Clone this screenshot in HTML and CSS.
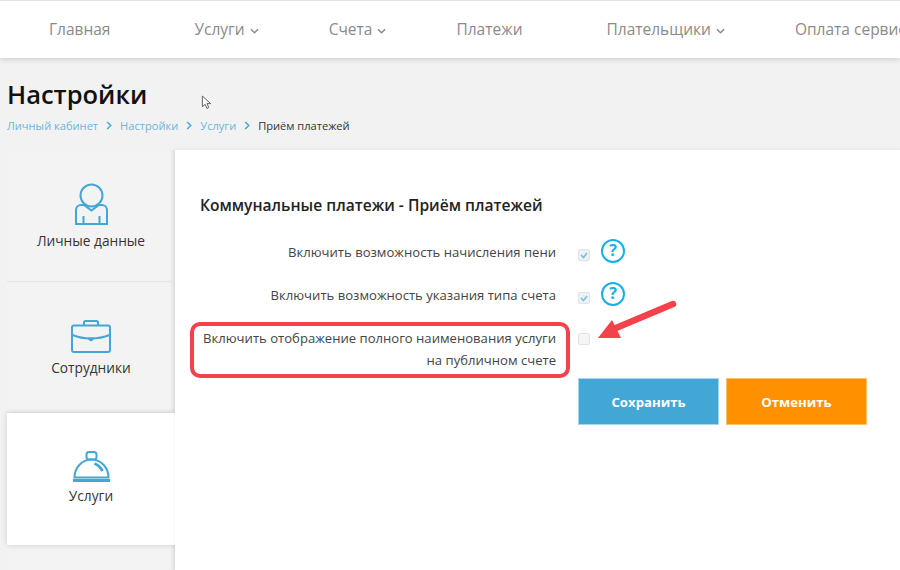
FILE: index.html
```html
<!DOCTYPE html>
<html>
<head>
	<title>Настройки</title>
	<meta name="viewport" content="width=device-width, initial-scale=1">
	<link rel="stylesheet" href="styles.css">
</head>
<body>
	<div class="top-nav">
		<a class="plain">Главная</a>
		<a>Услуги <svg class="chevron" viewBox="0 0 10 6"><path d="M1 1l4 4 4-4"/></svg></a>
		<a>Счета <svg class="chevron" viewBox="0 0 10 6"><path d="M1 1l4 4 4-4"/></svg></a>
		<a class="plain">Платежи</a>
		<a>Плательщики <svg class="chevron" viewBox="0 0 10 6"><path d="M1 1l4 4 4-4"/></svg></a>
		<a>Оплата сервиса</a>
	</div>

	<div class="page-head">
		<h1>Настройки</h1>
		<div class="breadcrumbs">
			<a>Личный кабинет</a>
			<svg class="crumb-arrow" viewBox="0 0 6 10"><path d="M1 1l4 4-4 4"/></svg>
			<a>Настройки</a>
			<svg class="crumb-arrow" viewBox="0 0 6 10"><path d="M1 1l4 4-4 4"/></svg>
			<a>Услуги</a>
			<svg class="crumb-arrow" viewBox="0 0 6 10"><path d="M1 1l4 4-4 4"/></svg>
			<span>Приём платежей</span>
		</div>
	</div>

	<div class="layout">
		<div class="side-menu">
			<div class="side-item person">
				<svg class="side-icon" viewBox="0 0 33 42">
					<circle cx="16.500" cy="12.500" r="11"/>
					<path d="M9 22H6a5 5 0 0 0-5 5v14h31V27a5 5 0 0 0-5-5h-3l-7.500 5.500z"/>
					<path d="M8.500 33v8M24.500 33v8"/>
				</svg>
				<span>Личные данные</span>
			</div>
			<div class="side-item case">
				<svg class="side-icon" viewBox="0 0 40 33">
					<rect x="1" y="5.500" width="38" height="26.500" rx="2"/>
					<path d="M13 5.500V2.500A1.500 1.500 0 0 1 14.500 1h11A1.500 1.500 0 0 1 27 2.500v3"/>
					<path d="M1.500 15c6 2.500 12.500 3.500 18.500 3.500s12.500-1 18.500-3.500"/>
					<path class="solid" d="M17.500 17.500h5v2.500l-2.500 1.500-2.500-1.500z"/>
				</svg>
				<span>Сотрудники</span>
			</div>
			<div class="side-item active">
				<svg class="side-icon" viewBox="0 0 37 32">
					<path d="M1.500 26.500a17 18 0 0 1 34 0z"/>
					<rect x="13.500" y="1" width="10" height="7.500" rx="2.500"/>
					<path d="M0 29.500h37" class="thick"/>
					<path d="M21.500 12.500c3.500 1.500 6.500 4.500 8 7.500" class="thick"/>
				</svg>
				<span>Услуги</span>
			</div>
			<div class="side-item rest"></div>
		</div>

		<div class="content">
			<h2>Коммунальные платежи - Приём платежей</h2>
			<div class="form-row">
				<label>Включить возможность начисления пени</label>
				<span class="check on"><svg viewBox="0 0 10 10"><path d="M2 5l2.500 2.500L8 3"/></svg></span>
				<span class="help">?</span>
			</div>
			<div class="form-row">
				<label>Включить возможность указания типа счета</label>
				<span class="check on"><svg viewBox="0 0 10 10"><path d="M2 5l2.500 2.500L8 3"/></svg></span>
				<span class="help">?</span>
			</div>
			<div class="form-row wide">
				<label>Включить отображение полного наименования услуги<br>на публичном счете</label>
				<span class="check"></span>
			</div>
			<div class="buttons">
				<button class="save">Сохранить</button>
				<button class="cancel">Отменить</button>
			</div>
		</div>
	</div>

	<!-- пометки поверх скриншота -->
	<svg class="cursor" viewBox="0 0 12 16"><path d="M1.500 1v11.500l3-2.500 2 4.500 2-1-2-4.300h4z"/></svg>
	<div class="red-box"></div>
	<svg class="red-arrow" viewBox="0 0 90 50">
		<path class="shaft" d="M81 8L24 32"/>
		<path class="head" d="M6 42L20 24l9 18z"/>
	</svg>
</body>
</html>
```

FILE: styles.css
```css
* {
	box-sizing: border-box;
}
html, body {
	height: 570px;
	overflow: hidden;
}
body {
	margin: 0;
	padding: 0;
	position: relative;
	font-family: "Open Sans", sans-serif;
	background-color: #f2f2f2;
	color: #333;
}
.top-nav {
	display: flex;
	gap: 70px;
	align-items: center;
	height: 58px;
	padding: 0 0 2px 49px;
	background-color: #fff;
	border-top: 1px solid #e4e4e4;
	box-shadow: 0px 1px 6px rgba(0,0,0,0.18);
	font-size: 15.500px;
	color: #8a8a8a;
	white-space: nowrap;
	overflow: hidden;
	position: relative;
}
.top-nav a {
	flex-shrink: 0;
}
.top-nav a.plain {
	margin-right: 14px;
}
.chevron {
	width: 9px;
	height: 6px;
	margin-left: 1px;
	vertical-align: 1px;
	fill: none;
	stroke: #8a8a8a;
	stroke-width: 1.6;
}
.page-head {
	height: 92px;
	padding: 18px 0 0 7px;
}
.page-head h1 {
	margin: 0;
	font-size: 25.500px;
	line-height: 36px;
	font-weight: 600;
	color: #111;
}
.breadcrumbs {
	display: flex;
	align-items: center;
	margin-top: 5px;
	font-size: 11.100px;
	line-height: 17px;
	color: #333;
}
.breadcrumbs a {
	color: #6fb3dc;
}
.crumb-arrow {
	width: 6px;
	height: 9px;
	margin: 0 8px;
	fill: none;
	stroke: #43a7d6;
	stroke-width: 1.6;
}
.layout {
	display: flex;
	margin-left: 7px;
}
.side-menu {
	width: 168px;
	flex-shrink: 0;
	display: flex;
	flex-direction: column;
}
.side-item {
	height: 131.500px;
	display: flex;
	flex-direction: column;
	align-items: center;
	padding-top: 38px;
	border-bottom: 1px solid #e6e6e6;
	font-size: 13.700px;
	line-height: 18px;
	color: #333;
	background-color: #f3f3f3;
	box-shadow: inset -4px 0 4px -2px rgba(0,0,0,0.09);
}
.side-item.person {
	padding-top: 33px;
}
.side-item.active {
	background-color: #fff;
	border-bottom: none;
	box-shadow: 0px 0px 6px rgba(0,0,0,0.14);
	position: relative;
}
.side-item.rest {
	height: 30px;
	border-bottom: none;
}
.side-icon {
	width: 37px;
	height: 32px;
	margin-bottom: 4px;
	fill: none;
	stroke: #43a7d6;
	stroke-width: 2;
}
.person .side-icon {
	width: 33px;
	height: 42px;
	margin-bottom: 7px;
}
.case .side-icon {
	width: 40px;
	height: 33px;
	margin-bottom: 6px;
}
.side-icon .solid {
	fill: #43a7d6;
	stroke: none;
}
.side-icon .thick {
	stroke-width: 2.800;
}
.content {
	flex: 1;
	height: 420px;
	background-color: #fff;
	padding-top: 45px;
	position: relative;
	box-shadow: 0px -1px 4px rgba(0,0,0,0.05);
}
.content h2 {
	margin: 0 0 26px 25px;
	font-size: 15.600px;
	line-height: 20px;
	font-weight: 600;
	color: #222;
}
.form-row {
	display: flex;
	align-items: flex-start;
	height: 43px;
}
.form-row label {
	width: 381px;
	text-align: right;
	font-size: 13.100px;
	line-height: 22px;
	color: #444;
}
.check {
	width: 12px;
	height: 12px;
	margin: 6px 0 0 22px;
	border: 1px solid #e2e2e2;
	border-radius: 2px;
	background-color: #f6f6f6;
}
.check.on {
	margin-top: 8px;
	background-color: #eef2f5;
}
.check svg {
	display: block;
	fill: none;
	stroke: #74bfe8;
	stroke-width: 1.6;
}
.help {
	width: 24px;
	height: 24px;
	margin: -2px 0 0 11px;
	border: 2.500px solid #12b1e6;
	border-radius: 50%;
	text-align: center;
	font-size: 16px;
	line-height: 19px;
	font-weight: 700;
	color: #12b1e6;
}
.form-row.wide {
	height: 51px;
}
.buttons {
	display: flex;
	gap: 7px;
	margin-left: 403px;
}
.buttons button {
	width: 141px;
	height: 47px;
	border: 1px solid #a5d6ee;
	font-family: "Open Sans", sans-serif;
	font-size: 13.200px;
	font-weight: 700;
	color: #fff;
	background-color: #43a7d6;
}
.buttons button.cancel {
	border-color: #ffc266;
	background-color: #ff9100;
}
.cursor {
	position: absolute;
	left: 201px;
	top: 95px;
	width: 11px;
	height: 15px;
	fill: #fff;
	stroke: #555;
	stroke-width: 1;
}
.red-box {
	position: absolute;
	left: 190px;
	top: 322px;
	width: 380px;
	height: 56px;
	border: 4px solid #f5414a;
	border-radius: 10px;
}
.red-arrow {
	position: absolute;
	left: 592px;
	top: 296px;
	width: 90px;
	height: 50px;
}
.red-arrow .shaft {
	fill: none;
	stroke: #f5414a;
	stroke-width: 6.500;
	stroke-linecap: round;
}
.red-arrow .head {
	fill: #f5414a;
}
```
